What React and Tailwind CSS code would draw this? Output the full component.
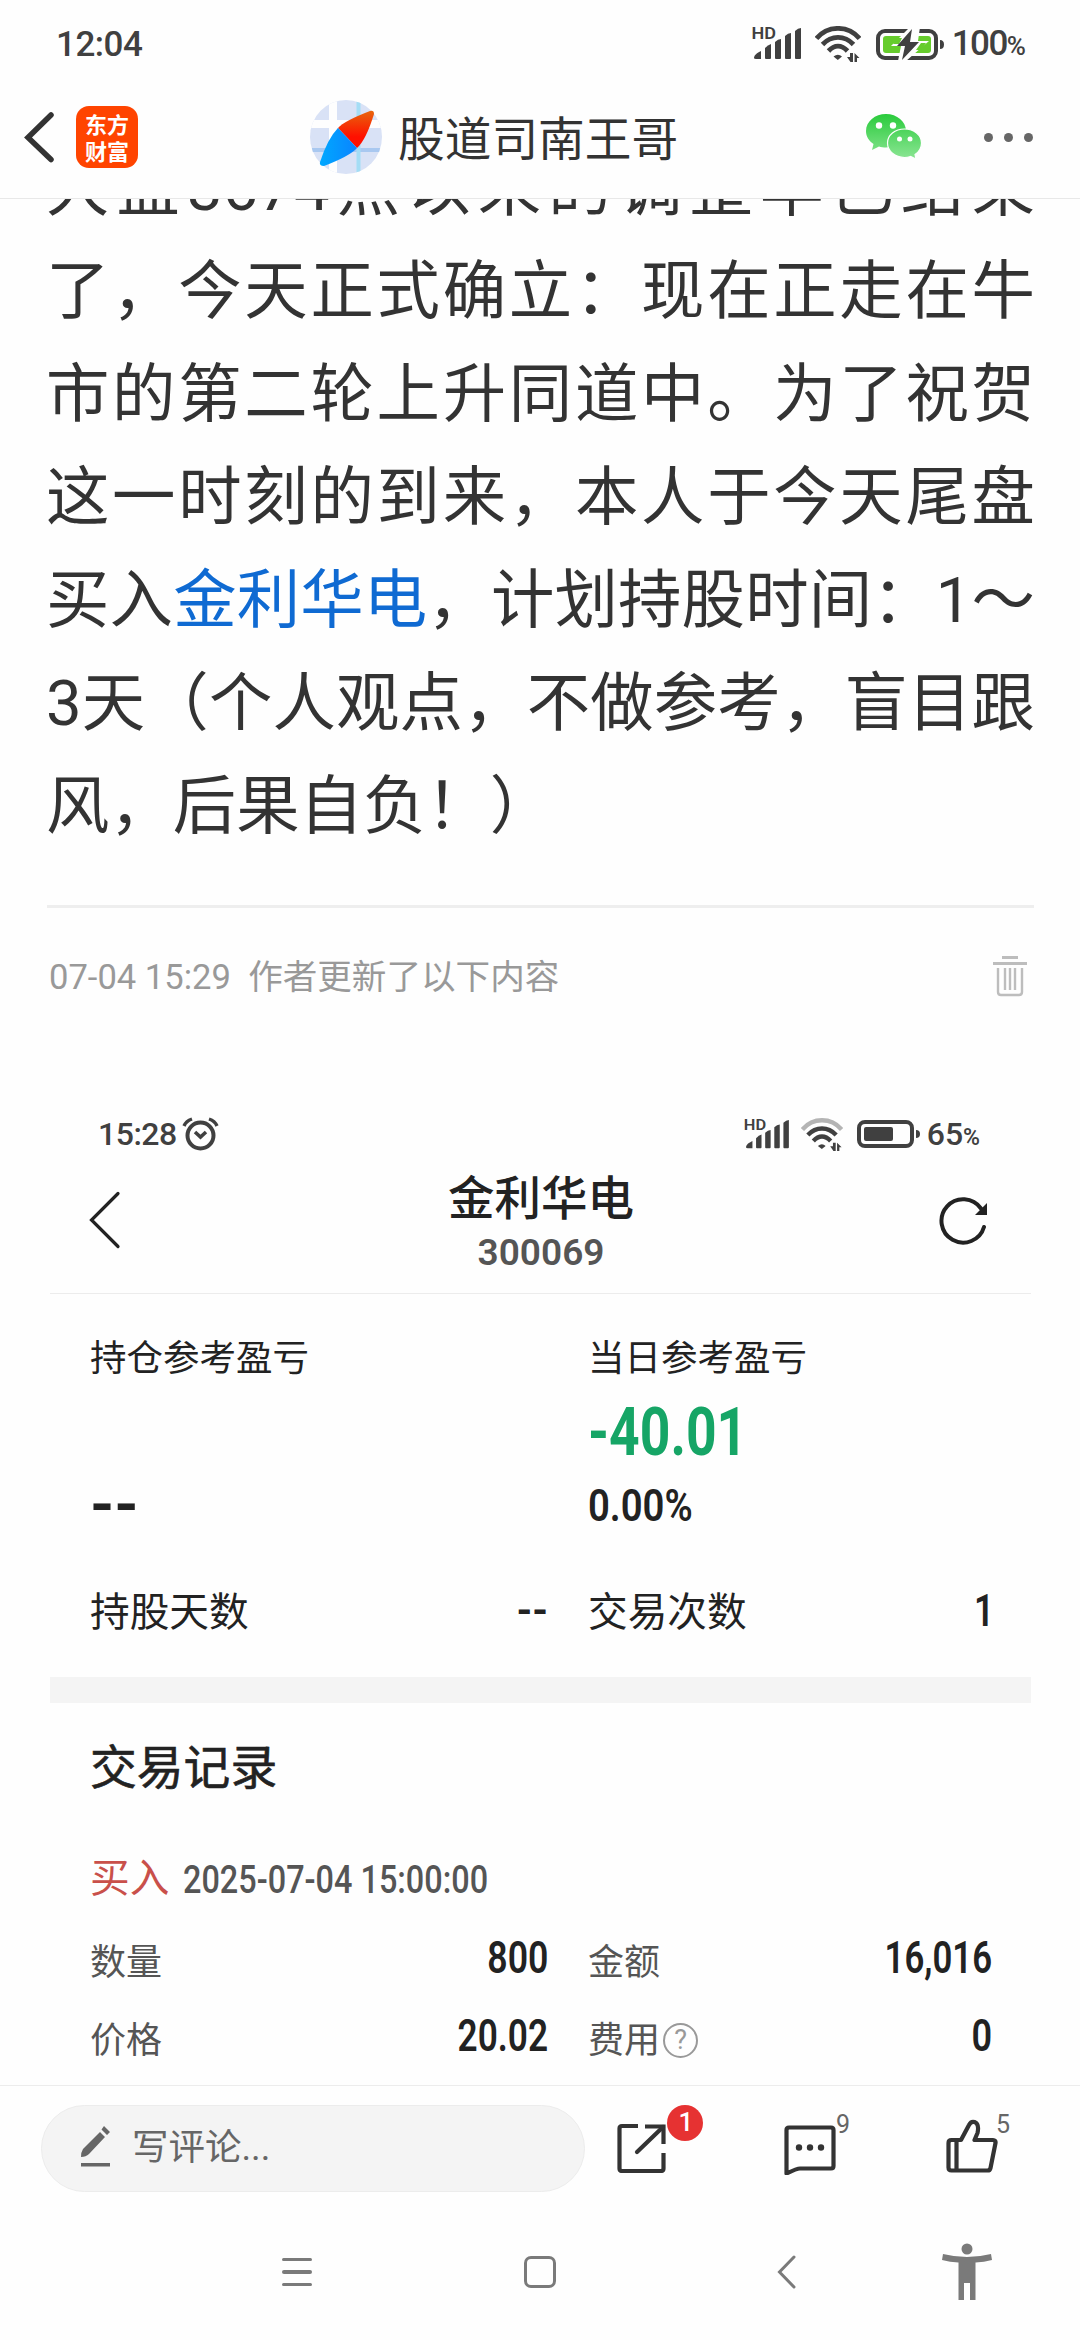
import React from "react";

const SignalIcon = ({ className }) => (
  <svg className={`overflow-visible ${className}`} viewBox="0 0 50 34" fill="#404040">
    <text x="-0.500" y="12" fontSize="16.500" fontWeight="600" fontFamily="Roboto, sans-serif" textLength="24.500" lengthAdjust="spacingAndGlyphs">HD</text>
    <path d="M2 31c0-3 3-5 7-7v8H4q-2 0-2-1z" />
    <path d="M13 21q3-3 6-4v14q0 1-1 1h-4q-1 0-1-1z" />
    <path d="M23 15q3-3 6-3v19q0 1-1 1h-4q-1 0-1-1z" />
    <path d="M33 9q3-3 6-3v25q0 1-1 1h-4q-1 0-1-1z" />
    <path d="M43 4q3-3 6-3v30q0 1-1 1h-4q-1 0-1-1z" />
  </svg>
);

const WifiIcon = ({ className, outer = "#404040" }) => (
  <svg className={className} viewBox="0 0 46 36" fill="none" stroke="#404040" strokeWidth="4.800">
    <path d="M1.500 12.500C13-1 33-1 44.500 12.500" stroke={outer} />
    <path d="M7.500 18.500c9-9.500 22-9.500 31 0" />
    <path d="M13.500 25c6-6.500 13-6.500 19 0" />
    <path d="M18.500 30.500q4.500-3.500 8.500 0L22.800 34z" fill="#404040" stroke="none" />
    <path d="M32 31h3v-4h3v9h-2.500zM39.500 27l5 5H42v4h-2.500z" fill="#404040" stroke="none" />
  </svg>
);

const ChargingBattery = () => (
  <svg className="h-[32px] w-[68px]" viewBox="0 0 68 32">
    <rect x="2" y="3" width="58" height="27" rx="7" fill="none" stroke="#404040" strokeWidth="4" />
    <rect x="7" y="8" width="48" height="17" rx="3" fill="#66cc2c" />
    <path d="M34-1L15 18h10l-3 15h8l23-20H42l2-14z" fill="#fefefe" />
    <path d="M26 10h-5l-4 6h6zM40 22h5l5-7h-5z" fill="#66cc2c" />
    <path d="M36 1L21 18h8l-3 14 17-18h-9z" fill="#404040" />
    <path d="M64 12q4 0 4 4.500t-4 4.500z" fill="#404040" />
  </svg>
);

const Avatar = () => (
  <svg className="ml-[172px] h-[74px] w-[72px]" viewBox="0 0 72 74">
    <defs>
      <clipPath id="avatarClip"><ellipse cx="36" cy="37" rx="36" ry="37" /></clipPath>
      <linearGradient id="needleRed" x1="0" y1="0" x2="0" y2="1">
        <stop offset="0" stopColor="#e8650c" />
        <stop offset="0.700" stopColor="#ff1000" />
      </linearGradient>
      <linearGradient id="needleBlue" x1="0" y1="0" x2="1" y2="0">
        <stop offset="0" stopColor="#00a8ff" />
        <stop offset="1" stopColor="#0a84ff" />
      </linearGradient>
    </defs>
    <g clipPath="url(#avatarClip)">
      <rect width="72" height="74" fill="#d9e2f6" />
      <path d="M0 24h72M23 0v74" stroke="#fefefe" strokeWidth="8" />
      <path d="M0 50h72" stroke="#a9c8f0" strokeWidth="4" />
      <path d="M48.500 0v74" stroke="#a4ddf5" strokeWidth="4" />
    </g>
    <path d="M28 28Q34 21 60 11q4-1 4 3Q56 40 47 48z" fill="url(#needleRed)" />
    <path d="M28 28L47 48Q40 56 14 66q-5 0-4-4Q18 38 28 28z" fill="url(#needleBlue)" />
  </svg>
);

const WechatIcon = () => (
  <svg className="h-[46px] w-[56px]" viewBox="0 0 56 46">
    <defs>
      <linearGradient id="wechat" gradientUnits="userSpaceOnUse" x1="0" y1="0" x2="0" y2="46">
        <stop offset="0" stopColor="#2acb3c" />
        <stop offset="1" stopColor="#8ee696" />
      </linearGradient>
    </defs>
    <path d="M20 0C9 0 0 7.500 0 17c0 5.500 3 10 7.500 13L6 36l7-3.500c2 .6 4.500 1 7 1 11 0 20-7.500 20-16.700S31 0 20 0z" fill="url(#wechat)" />
    <path d="M38.500 15C29 15 21.500 21 21.500 29s7.500 14.500 17 14.500q3 0 6-1l5.500 2.500-1-4.500c4-2.500 6.500-6.500 6.500-11.500 0-8-7.500-14-17-14z" fill="url(#wechat)" stroke="#fefefe" strokeWidth="1.200" />
    <circle cx="13" cy="11.500" r="3.200" fill="#fff" />
    <circle cx="27" cy="11.500" r="3.200" fill="#fff" />
    <circle cx="33.500" cy="25" r="2.500" fill="#fff" />
    <circle cx="44" cy="25" r="2.500" fill="#fff" />
  </svg>
);

const TrashIcon = () => (
  <svg className="h-[42px] w-[36px]" viewBox="0 0 36 42" fill="none" stroke="#bdbdbd" strokeWidth="3">
    <path d="M10 2.500h16M1 8.500h34" />
    <path d="M6 13v24q0 3 3 3h18q3 0 3-3V13M13 13v22M18 13v22M23 13v22" strokeWidth="2.400" />
  </svg>
);

const AlarmIcon = () => (
  <svg className="ml-[5px] h-[34px] w-[37px]" viewBox="0 0 37 34" fill="none" stroke="#404040" strokeWidth="4">
    <circle cx="18.500" cy="18.500" r="13" />
    <path d="M13 15l5.500 5 5.500-5" strokeWidth="3.600" />
    <path d="M2 9q2-5 8-7M35 9q-2-5-8-7" strokeWidth="3.400" />
  </svg>
);

const RefreshIcon = () => (
  <svg className="h-[50px] w-[50px]" viewBox="0 0 50 50" fill="none" stroke="#222" strokeWidth="4">
    <path d="M46 32A21.700 21.700 0 1 1 43 13.500" strokeLinecap="round" />
    <path d="M49 8v12H37z" fill="#222" stroke="none" />
  </svg>
);

const ShareIcon = () => (
  <svg className="h-[50px] w-[50px]" viewBox="0 0 50 50" fill="none" stroke="#333" strokeWidth="4.200">
    <path d="M21 3H5Q2.500 3 2.500 5.500v40Q2.500 48 5 48h39q2.500 0 2.500-2.500V30" />
    <path d="M28 3.500h18.500V21" />
    <path d="M46 4L20 29" strokeLinecap="round" />
  </svg>
);

const CommentIcon = () => (
  <svg className="h-[50px] w-[52px]" viewBox="0 0 52 50" fill="none" stroke="#333" strokeWidth="4.200" strokeLinejoin="round">
    <path d="M5 2.500h42q2.500 0 2.500 2.500v36q0 2.500-2.500 2.500H16q-3 0-13.500 5V5Q2.500 2.500 5 2.500z" />
    <g fill="#333" stroke="none">
      <circle cx="15" cy="22.500" r="3.200" />
      <circle cx="26" cy="22.500" r="3.200" />
      <circle cx="37" cy="22.500" r="3.200" />
    </g>
  </svg>
);

const LikeIcon = () => (
  <svg className="h-[54px] w-[52px]" viewBox="0 0 52 54" fill="none" stroke="#333" strokeWidth="4.200" strokeLinejoin="round">
    <path d="M2.500 24q0-3 3-3H15L23 6q2-4 5.500-3 5 2 3 11l-3 7H47q3 0 2.500 3l-5 25q-.5 2.500-3 2.500H5.500q-3 0-3-3z" />
    <path d="M10.500 21v30" />
  </svg>
);

const PencilIcon = () => (
  <svg className="ml-[39px] -mt-[2px] h-[42px] w-[31px]" viewBox="0 0 31 42" fill="#666">
    <path d="M19 6l5 5L8 28q-3 3-8 3 0-5 2-8zM23 0l6 6-3 3-5.500-5.500z" />
    <path d="M0 37h29v3.500H0z" />
  </svg>
);

const PersonIcon = () => (
  <svg className="h-[58px] w-[50px]" viewBox="0 0 50 58" fill="#7a7a7a">
    <circle cx="25" cy="6" r="5.500" />
    <path d="M1 11q24 6 48 0l1 6q-8 2-16.500 2.500V57H28V40h-6v17h-5.500V19.500Q8 19 0 17z" />
  </svg>
);

// Narrow DIN-like digits
const Num = ({ className = "", children }) => (
  <span className={`inline-block whitespace-nowrap font-['Roboto'] text-[44px] font-semibold ${className}`}>{children}</span>
);

const Dashes = ({ className }) => (
  <span className={`inline-block whitespace-nowrap font-['Roboto'] font-bold ${className}`}>--</span>
);

const Header = () => (
  <header className="h-[199px] shrink-0 border-b border-[#e8e8e8] bg-[#fefefe]">
    <div className="flex h-[88px] items-center pl-[56px] pr-[54px] text-[#404040]">
      <span className="mt-[2px] text-[35px] font-medium tracking-[-0.500px]">12:04</span>
      <div className="ml-auto flex items-center">
        <SignalIcon className="h-[34px] w-[50px]" />
        <WifiIcon className="ml-[13px] h-[36px] w-[46px]" />
        <span className="ml-[15px]"><ChargingBattery /></span>
        <span className="ml-[8px] whitespace-nowrap text-[35px] font-medium tracking-[-1.500px]">100<span className="text-[26px] tracking-normal">%</span></span>
      </div>
    </div>
    <div className="flex h-[98px] items-center pl-[24px]">
      <svg className="h-[52px] w-[32px]" viewBox="0 0 32 52" fill="none" stroke="#333" strokeWidth="5.500" strokeLinecap="round">
        <path d="M27 4L4 26.500l23 22" />
      </svg>
      <div className="ml-[20px] flex h-[62px] w-[62px] flex-col items-center justify-center rounded-[13px] bg-[#ff4400] font-['Noto_Sans_CJK_SC'] text-[22px] font-bold leading-[27px] text-white">
        <span>东方</span>
        <span>财富</span>
      </div>
      <Avatar />
      <h1 className="ml-[16px] mt-[5px] whitespace-nowrap text-[46.700px] leading-[60px] text-[#333]">股道司南王哥</h1>
      <span className="ml-[188px]"><WechatIcon /></span>
      <div className="ml-[62px] flex gap-[11px]">
        <span className="h-[9px] w-[9px] rounded-full bg-[#666]" />
        <span className="h-[9px] w-[9px] rounded-full bg-[#666]" />
        <span className="h-[9px] w-[9px] rounded-full bg-[#666]" />
      </div>
    </div>
  </header>
);

const Article = () => (
  <article className="-mt-[62px] ml-[46px] w-[989px] whitespace-nowrap text-[63.400px] leading-[103px] text-[#333]">
    <p className="[text-align-last:justify]">大盘3674点以来的调整早已结束</p>
    <p className="[text-align-last:justify]">了，今天正式确立：现在正走在牛</p>
    <p className="[text-align-last:justify]">市的第二轮上升同道中。为了祝贺</p>
    <p className="[text-align-last:justify]">这一时刻的到来，本人于今天尾盘</p>
    <p className="[text-align-last:justify]">买入<a className="text-[#0f6ad2]">金利华电</a>，计划持股时间：1～</p>
    <p className="[text-align-last:justify]">3天（个人观点，不做参考，盲目跟</p>
    <p>风，后果自负！）</p>
  </article>
);

const Holding = () => (
  <section className="ml-[50px] w-[981px] text-[#222]">
    <div className="mt-[108px] flex h-[40px] items-center pl-[48px] pr-[51px] text-[#404040]">
      <span className="text-[32px] font-medium tracking-[-0.500px]">15:28</span>
      <AlarmIcon />
      <div className="ml-auto flex items-center">
        <SignalIcon className="h-[31px] w-[46px]" />
        <WifiIcon className="ml-[11px] h-[33px] w-[42px]" outer="#b4b4b4" />
        <svg className="ml-[14px] h-[28px] w-[63px]" viewBox="0 0 63 28" fill="#404040">
          <rect x="2" y="2" width="53" height="24" rx="6" fill="none" stroke="#404040" strokeWidth="4" />
          <rect x="7" y="7" width="29" height="14" rx="2" />
          <path d="M59 10q4 0 4 4t-4 4z" />
        </svg>
        <span className="ml-[7px] whitespace-nowrap text-[32px] font-medium">65<span className="text-[23px]">%</span></span>
      </div>
    </div>
    <div className="flex h-[140px] items-center justify-between border-b border-[#ececec] pb-[8px] pl-[39px] pr-[43px]">
      <svg className="h-[58px] w-[32px]" viewBox="0 0 32 58" fill="none" stroke="#222" strokeWidth="3.200" strokeLinecap="round">
        <path d="M29 2.500L2.500 29 29 55.500" />
      </svg>
      <div className="mt-[12px] ml-[23px] flex flex-col items-center">
        <h2 className="text-[46.500px] font-medium leading-[54px]">金利华电</h2>
        <span className="text-[37px] font-semibold leading-[54px] text-[#555]">300069</span>
      </div>
      <RefreshIcon />
    </div>

    <div className="grid grid-cols-[456px_402px] gap-x-[42px] pl-[40px] pt-[40px]">
      <span className="text-[36.500px] leading-[50px]">持仓参考盈亏</span>
      <span className="text-[36.500px] leading-[50px]">当日参考盈亏</span>
      <span className="mt-[16px] h-[66px]" />
      <Num className="mt-[16px] h-[66px] origin-left scale-x-[0.81] text-[66px]! font-bold! leading-[66px] text-[#16a566]">-40.01</Num>
      <Dashes className="mt-[18px] h-[44px] origin-left scale-x-[1.03] text-[60px] leading-[42px]" />
      <Num className="mt-[18px] h-[44px] origin-left scale-x-[0.87] leading-[44px]">0.00%</Num>
      <div className="mt-[60px] flex h-[50px] justify-between text-[39.700px] leading-[50px]">
        <span>持股天数</span>
        <Dashes className="-mt-[2px] mr-[-2px] origin-right text-[40px] leading-[50px]" />
      </div>
      <div className="mt-[60px] flex h-[50px] justify-between text-[39.700px] leading-[50px]">
        <span>交易次数</span>
        <Num className="-mt-[2px] mr-[-4px] origin-right scale-x-[0.8] leading-[50px]">1</Num>
      </div>
    </div>

    <div className="mt-[39px] h-[26px] bg-[#f4f4f4]" />

    <h3 className="ml-[40px] mt-[35px] text-[46.800px] leading-[60px] [-webkit-text-stroke:0.6px_#222]">交易记录</h3>
    <div className="ml-[40px] mt-[56px] flex h-[50px] leading-[50px]">
      <span className="text-[39.700px] text-[#c9504a]">买入</span>
      <Num className="ml-[14px] mt-px origin-left scale-x-[0.853] text-[38px]! font-medium! text-[#555]">2025-07-04 15:00:00</Num>
    </div>
    <div className="ml-[40px] mt-[34px] grid grid-cols-[456px_402px] gap-x-[42px] gap-y-[28px] text-[36px] leading-[50px] text-[#555]">
      <div className="flex h-[50px] justify-between">
        <span>数量</span>
        <Num className="-mt-[5px] mr-[-2px] origin-right scale-x-[0.81] text-[#222]">800</Num>
      </div>
      <div className="flex h-[50px] justify-between">
        <span>金额</span>
        <Num className="-mt-[5px] mr-[-2px] origin-right scale-x-[0.79] text-[#222]">16,016</Num>
      </div>
      <div className="flex h-[50px] justify-between">
        <span>价格</span>
        <Num className="-mt-[5px] mr-[-2px] origin-right scale-x-[0.8] text-[#222]">20.02</Num>
      </div>
      <div className="flex h-[50px] justify-between">
        <span className="flex items-center">
          费用
          <span className="ml-[3px] -mt-px flex h-[35px] w-[35px] items-center justify-center rounded-full border-2 border-[#999] text-[27px] leading-none text-[#999]">?</span>
        </span>
        <Num className="-mt-[5px] mr-[-2px] origin-right scale-x-[0.82] text-[#222]">0</Num>
      </div>
    </div>
  </section>
);

const BottomBar = () => (
  <div className="flex h-[125px] shrink-0 items-center border-t border-[#ececec] bg-[#fefefe] pl-[41px]">
    <div className="flex h-[87px] w-[544px] items-center rounded-full border border-[#ececec] bg-[#f4f4f4]">
      <PencilIcon />
      <span className="ml-[20px] text-[36.500px] leading-[50px] text-[#666]">写评论...</span>
    </div>
    <div className="relative ml-[32px] -mt-px">
      <ShareIcon />
      <span className="absolute -top-[18px] left-[50px] flex h-[36px] w-[36px] items-center justify-center rounded-full bg-[#e63232] pl-[2px] text-[26px] font-medium text-white">1</span>
    </div>
    <div className="relative ml-[117px] mt-[3px]">
      <CommentIcon />
      <span className="absolute -top-[15px] left-[52px] text-[25px] leading-[30px] text-[#666]">9</span>
    </div>
    <div className="relative ml-[110px] -mt-[5px]">
      <LikeIcon />
      <span className="absolute -top-[9px] left-[50px] text-[25px] leading-[30px] text-[#666]">5</span>
    </div>
  </div>
);

const NavBar = () => (
  <nav className="flex h-[124px] items-center bg-[#fefefe] pl-[282px]">
    <div className="flex w-[30px] flex-col gap-[9px]">
      <span className="h-[3.500px] rounded-full bg-[#7a7a7a]" />
      <span className="h-[3.500px] rounded-full bg-[#7a7a7a]" />
      <span className="h-[3.500px] rounded-full bg-[#7a7a7a]" />
    </div>
    <span className="ml-[212px] h-[32px] w-[32px] rounded-[7px] border-[3px] border-[#7a7a7a]" />
    <svg className="ml-[221px] h-[34px] w-[20px]" viewBox="0 0 20 34" fill="none" stroke="#7a7a7a" strokeWidth="3" strokeLinecap="round">
      <path d="M17 2L2.500 17 17 32" />
    </svg>
    <span className="ml-[145px]"><PersonIcon /></span>
  </nav>
);

export default function App() {
  return (
    <div className="flex h-[2340px] w-[1080px] flex-col overflow-hidden bg-[#fefefe] font-['Roboto','Noto_Sans_CJK_SC',sans-serif]">
      <Header />
      <main className="h-[1886px] shrink-0 overflow-hidden">
        <Article />
        <div className="ml-[47px] mt-[47px] h-[3px] w-[987px] bg-[#eeeeee]" />
        <div className="ml-[49px] mt-[38px] flex h-[60px] w-[979px] items-center justify-between text-[34.600px] text-[#999]">
          <p className="mt-[3px] whitespace-pre">07-04 15:29  作者更新了以下内容</p>
          <TrashIcon />
        </div>
        <Holding />
      </main>
      <BottomBar />
      <NavBar />
    </div>
  );
}
